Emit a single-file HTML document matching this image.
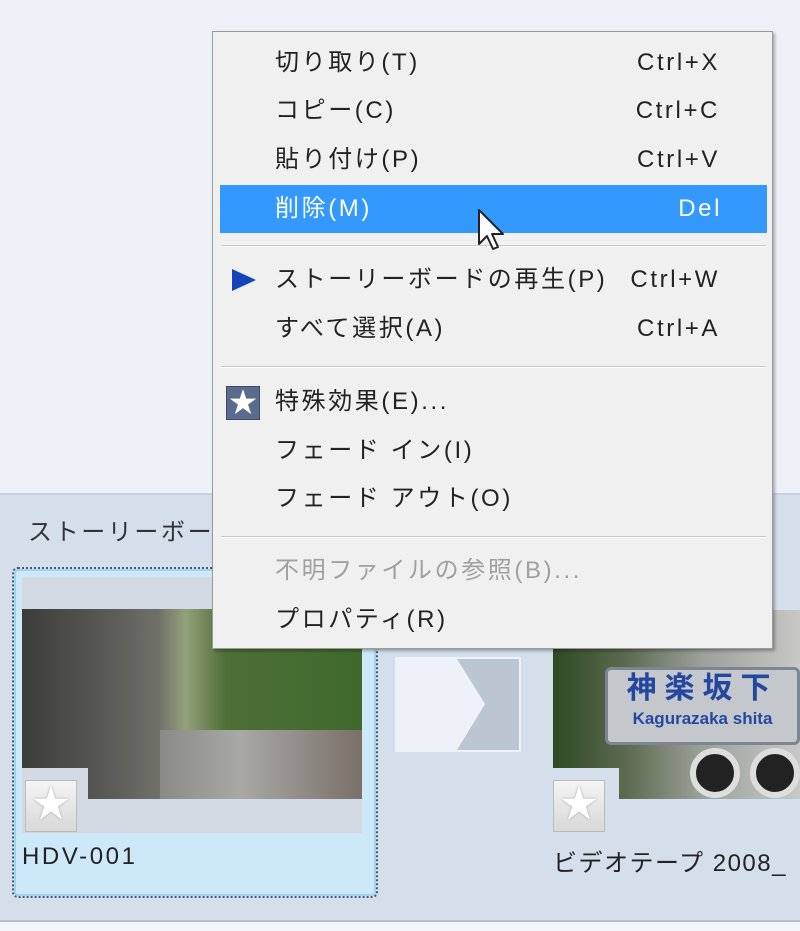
<!DOCTYPE html>
<html><head><meta charset="utf-8"><style>
*{margin:0;padding:0;box-sizing:border-box}
body{width:800px;height:931px;position:relative;overflow:hidden;background:#eef1f8;font-family:"Liberation Sans","Noto Sans CJK JP",sans-serif;letter-spacing:2.6px}
.abs{position:absolute}
.panel{left:0;top:493px;width:800px;height:438px;background:#d5dfeb;border-top:2px solid #c8d2de}
.menu{left:212px;top:31px;width:561px;height:618px;background:#f0f0f0;border:1px solid #9a9a9a;box-shadow:2px 2px 3px rgba(0,0,0,.3)}
.it{position:absolute;left:0;width:100%;height:48px;font-size:24px;line-height:48px;color:#222;white-space:nowrap}
.it .t{position:absolute;left:62px}
.it .k{position:absolute;right:52px}
.sep{position:absolute;left:8px;right:6px;height:2px;border-top:1px solid #c8c8c8;border-bottom:1px solid #fff}
.hl{background:#3399ff;color:#fff;left:7px;width:547px}
</style></head><body>
<div class="abs panel"></div>
<div class="abs" style="left:28px;top:512px;font-size:24px;color:#333;white-space:nowrap">ストーリーボード</div>
<!-- selected card -->
<div class="abs" style="left:12px;top:567px;width:366px;height:331px;background:#cde8f8;border:2px dotted #556;border-radius:6px;box-shadow:inset 0 0 0 2px #9fd3f0"></div>
<div class="abs" style="left:22px;top:577px;width:340px;height:256px;background:#d3dae4"></div>
<div class="abs" style="left:22px;top:609px;width:340px;height:190px;background:linear-gradient(90deg,#3c3c3a 0%,#5a5a58 25%,#6e7068 40%,#94a07c 48%,#4d6e35 60%,#3f6a2c 100%)"></div>
<div class="abs" style="left:160px;top:730px;width:202px;height:69px;background:linear-gradient(90deg,#8a8a88,#a8a8a6 40%,#7a7068)"></div>
<div class="abs" style="left:22px;top:768px;width:66px;height:65px;background:#d3dae4"></div>
<div class="abs" style="left:25px;top:780px;width:52px;height:52px;background:linear-gradient(#f4f4f4,#d8d8d8);border:1px solid #bbb;color:#fff;font-size:38px;line-height:48px;text-align:center;letter-spacing:0;text-shadow:0 0 2px #999">★</div>
<div class="abs" style="left:22px;top:843px;font-size:24px;color:#222">HDV-001</div>
<!-- arrow -->
<div class="abs" style="left:395px;top:657px;width:126px;height:95px;background:#bcc6d3;border:2px solid #eef2f8"></div>
<svg class="abs" style="left:397px;top:659px" width="90" height="91"><polygon points="0,0 60,0 88,45 60,91 0,91" fill="#eef2f8"/></svg>
<!-- right card -->
<div class="abs" style="left:553px;top:610px;width:247px;height:189px;background:linear-gradient(90deg,#2e4a24,#5d6b50 30%,#9aa09a 60%,#c8c8c6)"></div>
<div class="abs" style="left:605px;top:667px;width:195px;height:78px;background:#c4c8cc;border:3px solid #7d8590;border-radius:6px;color:#2448a0;text-align:center;letter-spacing:0">
<div style="font-size:30px;line-height:38px;letter-spacing:8px;font-weight:bold">神楽坂下</div><div style="font-size:17px;font-weight:bold;line-height:22px">Kagurazaka shita</div></div>
<div class="abs" style="left:690px;top:748px;width:50px;height:50px;border-radius:50%;background:#222;border:6px solid #ddd"></div>
<div class="abs" style="left:750px;top:748px;width:50px;height:50px;border-radius:50%;background:#222;border:6px solid #ddd"></div>
<div class="abs" style="left:553px;top:768px;width:66px;height:65px;background:#d5dfeb"></div>
<div class="abs" style="left:553px;top:780px;width:52px;height:52px;background:linear-gradient(#f4f4f4,#d8d8d8);border:1px solid #bbb;color:#fff;font-size:38px;line-height:48px;text-align:center;letter-spacing:0;text-shadow:0 0 2px #999">★</div>
<div class="abs" style="left:553px;top:843px;font-size:24px;color:#222;white-space:nowrap;letter-spacing:1.5px">ビデオテープ 2008_</div>
<div class="abs" style="left:0;top:920px;width:800px;height:11px;background:#f4f6f9;border-top:2px solid #b8c0cc"></div>
<!-- menu -->
<div class="abs menu">
<div class="it" style="top:7px"><span class="t">切り取り(T)</span><span class="k">Ctrl+X</span></div>
<div class="it" style="top:55px"><span class="t">コピー(C)</span><span class="k">Ctrl+C</span></div>
<div class="it" style="top:104px"><span class="t">貼り付け(P)</span><span class="k">Ctrl+V</span></div>
<div class="it hl" style="top:153px"><span class="t" style="left:55px">削除(M)</span><span class="k" style="right:45px">Del</span></div>
<div class="sep" style="top:213px"></div>
<div class="it" style="top:224px"><svg style="position:absolute;left:19px;top:13px" width="24" height="22"><polygon points="0,0 24,11 0,22" fill="#1744b8"/></svg><span class="t">ストーリーボードの再生(P)</span><span class="k">Ctrl+W</span></div>
<div class="it" style="top:273px"><span class="t">すべて選択(A)</span><span class="k">Ctrl+A</span></div>
<div class="sep" style="top:334px"></div>
<div class="it" style="top:346px"><div style="position:absolute;left:13px;top:8px;width:34px;height:34px;background:#5a6c8e;border:1px solid #3d4c6a;color:#fff;font-size:28px;line-height:32px;text-align:center;letter-spacing:0">★</div><span class="t">特殊効果(E)...</span></div>
<div class="it" style="top:395px"><span class="t">フェード イン(I)</span></div>
<div class="it" style="top:443px"><span class="t">フェード アウト(O)</span></div>
<div class="sep" style="top:504px"></div>
<div class="it" style="top:515px;color:#a0a0a0"><span class="t">不明ファイルの参照(B)...</span></div>
<div class="it" style="top:564px"><span class="t">プロパティ(R)</span></div>
</div>
<svg class="abs" style="left:477px;top:208px" width="28" height="44"><path d="M2,2 L2,36 L10,28 L16,41 L21,39 L15,26 L26,26 Z" fill="#fff" stroke="#222" stroke-width="2" stroke-linejoin="round"/></svg>
</body></html>
